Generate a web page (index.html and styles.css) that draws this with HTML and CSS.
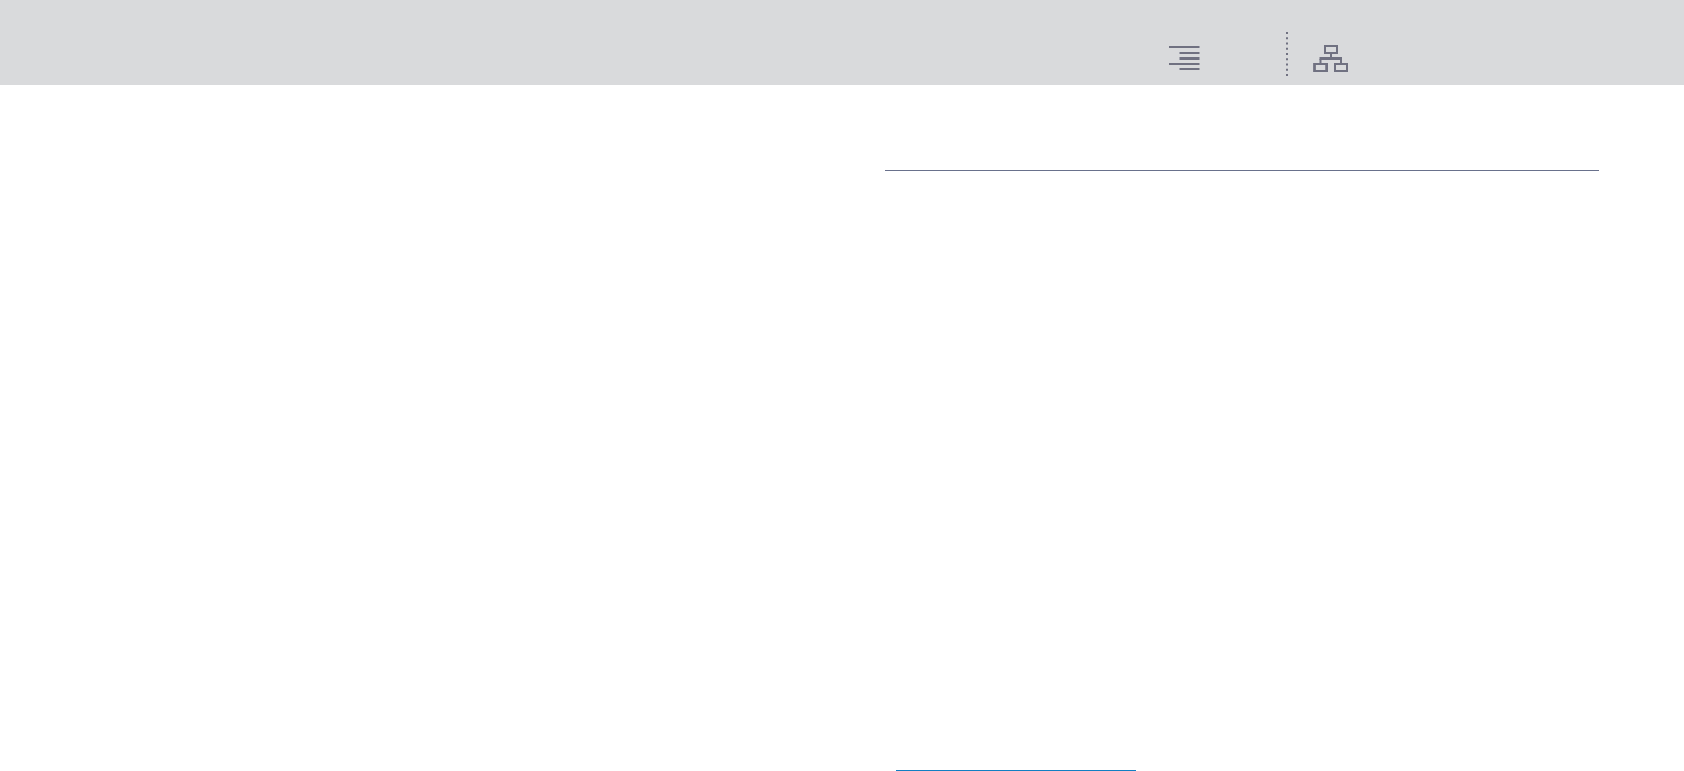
FILE: index.html
```
<!DOCTYPE html>
<html lang="en">

<head>
    <meta charset="UTF-8">
    <meta name="viewport" content="width=device-width, initial-scale=1.0">
    <title>Overview</title>
    <link rel="stylesheet" href="styles.css">
</head>

<body>

    <header class="topbar">
        <nav class="tools">
            <button class="tool" type="button" aria-label="Contents">
                <svg width="32" height="26" viewBox="0 0 32 26" fill="currentColor">
                    <rect x="0" y="1" width="30.5" height="2" />
                    <rect x="10.5" y="7" width="20" height="2" />
                    <rect x="10.5" y="12" width="20" height="3" />
                    <rect x="0" y="18" width="30.5" height="2" />
                    <rect x="10.5" y="23" width="20" height="2" />
                </svg>
            </button>
            <svg class="divider" width="2" height="44" viewBox="0 0 2 44">
                <path d="M1 0V44" stroke="currentColor" stroke-width="2" stroke-dasharray="2 3.25" />
            </svg>
            <button class="tool" type="button" aria-label="Site map">
                <svg width="36" height="28" viewBox="0 0 36 28" fill="none" stroke="currentColor" stroke-width="2">
                    <rect x="12" y="1" width="12" height="7" />
                    <path d="M18 9V13" />
                    <path d="M6.5 13.5H29" stroke-width="3" />
                    <path d="M7.5 14V19M28 14V19" />
                    <rect x="1.5" y="19" width="12.5" height="7" />
                    <path d="M1.5 18V27M13.5 18V27" stroke-width="2.5" />
                    <rect x="22" y="19" width="12" height="7" />
                </svg>
            </button>
        </nav>
    </header>

    <main class="page">
        <section class="content">
            <div class="heading"></div>
            <div class="panel"></div>
        </section>
    </main>

</body>

</html>
```

FILE: styles.css
```
* {
    box-sizing: border-box;
}

:root {
    --ink: rgb(112, 113, 129);
    --edge: 85px;
}

body {
    margin: 0;
    min-height: 100vh;
    display: flex;
    flex-direction: column;
    background-color: white;
    font-family: "Liberation Sans", Arial, sans-serif;
}

.topbar {
    display: flex;
    justify-content: flex-end;
    padding: 32px var(--edge) 9px;
    background-color: rgb(217, 218, 220);
    color: var(--ink);
}

.tools {
    display: flex;
    align-items: flex-end;
    width: 430px;
}

.tool {
    display: flex;
    align-items: flex-start;
    height: 31px;
    padding: 0;
    border: none;
    background: none;
    color: inherit;
    cursor: pointer;
}

.divider {
    margin: 0 25px 0 85px;
}

.page {
    flex: 1;
    display: flex;
    justify-content: flex-end;
    padding: 0 var(--edge);
}

.content {
    display: flex;
    flex-direction: column;
    width: 100%;
    max-width: 714px;
}

.heading {
    height: 86px;
    border-bottom: 1px solid rgb(105, 113, 140);
}

.panel {
    flex: 1;
    width: 240px;
    margin-left: 11px;
    border-bottom: 1px solid rgb(18, 127, 195);
}
```
